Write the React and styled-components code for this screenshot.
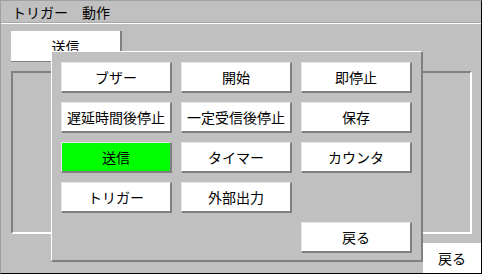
import React from "react";
import styled, { createGlobalStyle } from "styled-components";

const GlobalStyle = createGlobalStyle`
  html, body {
    margin: 0;
    padding: 0;
    background: #c0c0c0;
  }
  * {
    box-sizing: border-box;
  }
`;

const buttons = [
  { label: "ブザー" },
  { label: "開始" },
  { label: "即停止" },
  { label: "遅延時間後停止" },
  { label: "一定受信後停止" },
  { label: "保存" },
  { label: "送信", active: true },
  { label: "タイマー" },
  { label: "カウンタ" },
  { label: "トリガー" },
  { label: "外部出力" },
  null,
  null,
  null,
  { label: "戻る" }
];

const App = () => (
  <>
    <GlobalStyle />
    <Screen>
      <MenuBar>
        <MenuItem>トリガー</MenuItem>
        <MenuItem>動作</MenuItem>
      </MenuBar>
      <Content>
        <Tab>送信</Tab>
        <Frame />
        <Footer>
          <BackButton>戻る</BackButton>
        </Footer>
      </Content>
      <Popup>
        {buttons.map((b, i) =>
          b ? (
            <PanelButton key={i} $active={b.active}>
              {b.label}
            </PanelButton>
          ) : (
            <Empty key={i} />
          )
        )}
      </Popup>
    </Screen>
  </>
);

const Screen = styled.div`
  position: relative;
  width: 482px;
  height: 274px;
  background: #c0c0c0;
  border-left: 1px solid #a0a0a0;
  border-top: 1px solid #a0a0a0;
  border-right: 1px solid #000;
  border-bottom: 1px solid #000;
  font-family: "Noto Sans CJK JP", "Liberation Sans", sans-serif;
  font-size: 14px;
  color: #000;
  display: flex;
  flex-direction: column;
  overflow: hidden;
`;

const MenuBar = styled.div`
  height: 23px;
  display: flex;
  align-items: center;
  gap: 14px;
  padding-left: 11px;
  border-bottom: 1px solid #fff;
  box-shadow: inset 0 -1px 0 #a8a8a8;
`;

const MenuItem = styled.span`
  font-size: 14px;
  line-height: 20px;
`;

const Content = styled.div`
  flex: 1;
  display: flex;
  flex-direction: column;
  padding: 7px 0 0 10px;
`;

const Tab = styled.div`
  width: 111px;
  height: 31px;
  background: #fff;
  border-right: 2px solid #808080;
  border-bottom: 1px solid #808080;
  display: flex;
  align-items: center;
  justify-content: center;
  line-height: 1;
`;

const Frame = styled.div`
  margin-top: 9px;
  width: 461px;
  height: 163px;
  border-top: 2px solid #808080;
  border-left: 2px solid #808080;
  border-right: 2px solid #fff;
  border-bottom: 2px solid #fff;
`;

const Footer = styled.div`
  flex: 1;
  display: flex;
  justify-content: flex-end;
  align-items: flex-end;
  padding-top: 8px;
`;

const BackButton = styled.div`
  width: 58px;
  height: 30px;
  background: #fff;
  display: flex;
  align-items: center;
  justify-content: center;
  line-height: 1;
`;

const Popup = styled.div`
  position: absolute;
  left: 50px;
  top: 50px;
  width: 372px;
  height: 211px;
  background: #c0c0c0;
  border-top: 1px solid #fff;
  border-left: 1px solid #fff;
  border-right: 2px solid #808080;
  border-bottom: 2px solid #808080;
  padding: 10px 9px 0 9px;
  display: grid;
  grid-template-columns: repeat(3, 111px);
  grid-auto-rows: 31px;
  column-gap: 9px;
  row-gap: 9px;
`;

const PanelButton = styled.div`
  background: ${p => (p.$active ? "#00ff00" : "#fff")};
  border-top: 1px solid #e8e8e8;
  border-left: 1px solid #e8e8e8;
  border-right: 2px solid #808080;
  border-bottom: 2px solid #808080;
  display: flex;
  align-items: center;
  justify-content: center;
  line-height: 1;
`;

const Empty = styled.div``;

export default App;
